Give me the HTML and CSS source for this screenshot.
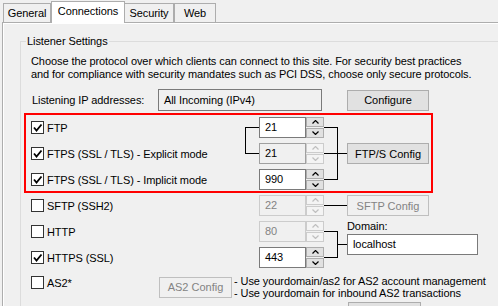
FILE: index.html
```html
<!DOCTYPE html>
<html lang="en">
<head>
    <meta charset="UTF-8">
    <title>Connections</title>
    <link rel="stylesheet" href="styles.css">
</head>
<body>
    <div class="tabs">
        <div class="tab tab-general">General</div>
        <div class="tab tab-active">Connections</div>
        <div class="tab tab-security">Security</div>
        <div class="tab tab-web">Web</div>
    </div>

    <div class="panel">
        <div class="page">
            <fieldset class="group">
                <legend>Listener Settings</legend>
                <p class="intro">Choose the protocol over which clients can connect to this site. For security best practices<br>and for compliance with security mandates such as PCI DSS, choose only secure protocols.</p>

                <div class="ip-row">
                    <span class="ip-label">Listening IP addresses:</span>
                    <div class="textbox ip-box">All Incoming (IPv4)</div>
                    <button class="btn">Configure</button>
                </div>

                <!-- FTP / FTPS rows, highlighted -->
                <div class="protocols highlight">
                    <label class="check c1 r1"><span class="box"><svg width="11" height="11"><path d="M2 5.5 4.5 8.5 9.5 2.5"/></svg></span>FTP</label>
                    <label class="check c1 r2"><span class="box"><svg width="11" height="11"><path d="M2 5.5 4.5 8.5 9.5 2.5"/></svg></span>FTPS (SSL / TLS) - Explicit mode</label>
                    <label class="check c1 r3"><span class="box"><svg width="11" height="11"><path d="M2 5.5 4.5 8.5 9.5 2.5"/></svg></span>FTPS (SSL / TLS) - Implicit mode</label>

                    <svg class="wire c2 r1-2" width="14" height="47"><path d="M0.5 10V37M0 10.5H14M0 36.5H14"/></svg>

                    <div class="spin c3 r1">
                        <span class="spin-value">21</span>
                        <span class="spin-arrows">
                            <span><svg width="7" height="4"><path d="M0.5 3.5 3.5 0.5 6.5 3.5"/></svg></span>
                            <span><svg width="7" height="4"><path d="M0.5 0.5 3.5 3.5 6.5 0.5"/></svg></span>
                        </span>
                    </div>
                    <div class="spin c3 r2 half-off">
                        <span class="spin-value">21</span>
                        <span class="spin-arrows">
                            <span><svg width="7" height="4"><path d="M0.5 3.5 3.5 0.5 6.5 3.5"/></svg></span>
                            <span><svg width="7" height="4"><path d="M0.5 0.5 3.5 3.5 6.5 0.5"/></svg></span>
                        </span>
                    </div>
                    <div class="spin c3 r3">
                        <span class="spin-value">990</span>
                        <span class="spin-arrows">
                            <span><svg width="7" height="4"><path d="M0.5 3.5 3.5 0.5 6.5 3.5"/></svg></span>
                            <span><svg width="7" height="4"><path d="M0.5 0.5 3.5 3.5 6.5 0.5"/></svg></span>
                        </span>
                    </div>

                    <svg class="wire c4 r1-3" width="23" height="73"><path d="M0 10.5H14M13.5 10V63M0 62.5H14M0 36.5H23"/></svg>

                    <button class="btn c5 r2">FTP/S Config</button>
                </div>

                <!-- SFTP / HTTP / HTTPS rows -->
                <div class="protocols lower">
                    <label class="check c1 r1"><span class="box"></span>SFTP (SSH2)</label>
                    <label class="check c1 r2"><span class="box"></span>HTTP</label>
                    <label class="check c1 r3"><span class="box"><svg width="11" height="11"><path d="M2 5.5 4.5 8.5 9.5 2.5"/></svg></span>HTTPS (SSL)</label>

                    <div class="spin c3 r1 disabled">
                        <span class="spin-value">22</span>
                        <span class="spin-arrows">
                            <span><svg width="7" height="4"><path d="M0.5 3.5 3.5 0.5 6.5 3.5"/></svg></span>
                            <span><svg width="7" height="4"><path d="M0.5 0.5 3.5 3.5 6.5 0.5"/></svg></span>
                        </span>
                    </div>
                    <div class="spin c3 r2 disabled">
                        <span class="spin-value">80</span>
                        <span class="spin-arrows">
                            <span><svg width="7" height="4"><path d="M0.5 3.5 3.5 0.5 6.5 3.5"/></svg></span>
                            <span><svg width="7" height="4"><path d="M0.5 0.5 3.5 3.5 6.5 0.5"/></svg></span>
                        </span>
                    </div>
                    <div class="spin c3 r3">
                        <span class="spin-value">443</span>
                        <span class="spin-arrows">
                            <span><svg width="7" height="4"><path d="M0.5 3.5 3.5 0.5 6.5 3.5"/></svg></span>
                            <span><svg width="7" height="4"><path d="M0.5 0.5 3.5 3.5 6.5 0.5"/></svg></span>
                        </span>
                    </div>

                    <svg class="wire c4 r1" width="23" height="21"><path d="M0 10.5H23"/></svg>
                    <svg class="wire c4 r2-3" width="23" height="47"><path d="M0 10.5H14M13.5 10V37M0 36.5H14M13.5 23.5H23"/></svg>

                    <button class="btn c5 r1" disabled>SFTP Config</button>

                    <div class="domain">
                        <span class="domain-label">Domain:</span>
                        <div class="textbox domain-box">localhost</div>
                    </div>
                </div>

                <div class="as2-row">
                    <label class="check as2-check"><span class="box"></span>AS2*</label>
                    <button class="btn as2-btn" disabled>AS2 Config</button>
                    <div class="as2-note">- Use yourdomain/as2 for AS2 account management<br>- Use yourdomain for inbound AS2 transactions</div>
                </div>

                <div class="bottom-row">
                    <button class="btn as2-btn"></button>
                </div>
            </fieldset>
        </div>
    </div>
</body>
</html>
```
FILE: styles.css
```css
html, body {
    overflow: hidden;
}
body {
    margin: 0;
    background-color: #f0f0f0;
    font-family: "Liberation Sans", Arial, sans-serif;
    font-size: 11px;
    letter-spacing: -0.08px;
    color: #000;
}

/* tab strip */
.tabs {
    display: flex;
    align-items: flex-end;
    height: 22px;
    padding-left: 3px;
}
.tab {
    box-sizing: border-box;
    height: 19px;
    line-height: 18px;
    text-align: center;
    border: 1px solid #adadad;
    border-bottom: none;
    background-color: #f0f0f0;
}
.tab-general {
    width: 48px;
}
.tab-active {
    width: 74px;
    height: 22px;
    margin-bottom: -1px;
    background-color: #fff;
    position: relative;
    z-index: 1;
}
.tab-security {
    width: 50px;
    margin-left: -1px;
}
.tab-web {
    width: 42px;
}

.panel {
    height: calc(100vh - 23px);
    margin-left: 2px;
    overflow: hidden;
    border-top: 1px solid #adadad;
    border-left: 1px solid #adadad;
    box-shadow: inset 1px 1px #fff;
}
.page {
    padding: 12px 0 0 17px;
}

/* group box */
.group {
    width: 520px;
    margin: 0;
    padding: 7px 0 0 10px;
    border: 1px solid #dcdcdc;
}
.group legend {
    margin-left: -5px;
    padding: 0 1px;
    line-height: 13px;
}
.intro {
    margin: 0;
    line-height: 13px;
}

.ip-row {
    display: flex;
    align-items: center;
    height: 22px;
    margin-top: 8px;
}
.ip-label {
    width: 126px;
    padding-left: 1px;
}

.textbox {
    box-sizing: border-box;
    height: 21px;
    line-height: 19px;
    padding-left: 5px;
    border: 1px solid #7a7a7a;
    background-color: #fff;
}
.ip-box {
    width: 164px;
    height: 22px;
    line-height: 20px;
    background-color: #f0f0f0;
}

.btn {
    box-sizing: border-box;
    width: 82px;
    height: 21px;
    padding: 0;
    border: 1px solid #adadad;
    background-color: #e1e1e1;
    font: inherit;
    color: #000;
}
.btn:disabled {
    border-color: #bfbfbf;
    background-color: #f0f0f0;
    color: #838383;
}
.ip-row .btn {
    margin-left: 25px;
}

/* protocol grid */
.protocols {
    display: grid;
    grid-template-columns: 214px 14px 65px 23px 82px 49px;
    grid-auto-rows: 21px;
    row-gap: 5px;
}
.highlight {
    box-sizing: border-box;
    width: 409px;
    margin: 2px 0 0 -7px;
    padding: 2px 0 1px 5px;
    border: 2px solid #ff0000;
}
.lower {
    margin-top: 2px;
}
.c1 { grid-column: 1; }
.c2 { grid-column: 2; }
.c3 { grid-column: 3; }
.c4 { grid-column: 4; }
.c5 { grid-column: 5; }
.r1 { grid-row: 1; }
.r2 { grid-row: 2; }
.r3 { grid-row: 3; }
.r1-2 { grid-row: 1 / 3; }
.r1-3 { grid-row: 1 / 4; }
.r2-3 { grid-row: 2 / 4; }

.check {
    display: flex;
    align-items: center;
    gap: 3px;
}
.box {
    box-sizing: border-box;
    width: 13px;
    height: 13px;
    border: 1px solid #333;
    background-color: #fff;
    display: flex;
}
.box path {
    fill: none;
    stroke: #000;
    stroke-width: 1.8;
}

.wire path {
    fill: none;
    stroke: #000;
    stroke-width: 1;
}

/* spin box */
.spin {
    display: flex;
    height: 21px;
}
.spin-value {
    box-sizing: border-box;
    width: 47px;
    line-height: 19px;
    padding-left: 5px;
    border: 1px solid #7a7a7a;
    background-color: #fff;
}
.spin-arrows {
    display: flex;
    flex-direction: column;
    justify-content: space-between;
    width: 18px;
}
.spin-arrows span {
    box-sizing: border-box;
    height: 10px;
    display: flex;
    align-items: center;
    justify-content: center;
    border: 1px solid #adadad;
    background-color: #e1e1e1;
}
.spin-arrows path {
    fill: none;
    stroke: #000;
    stroke-width: 1.2;
}
.half-off .spin-value {
    border-color: #a0a0a0;
    background-color: #f0f0f0;
}
.half-off .spin-arrows span,
.disabled .spin-arrows span {
    border-color: #cccccc;
    background-color: #f4f4f4;
}
.half-off .spin-arrows path,
.disabled .spin-arrows path {
    stroke: #bfbfbf;
}
.disabled .spin-value {
    border-color: #cccccc;
    background-color: #f0f0f0;
    color: #838383;
}

.domain {
    grid-column: 5 / 7;
    grid-row: 2 / 4;
    display: flex;
    flex-direction: column;
}
.domain-label {
    margin-top: -1px;
    line-height: 13px;
}
.domain-box {
    width: 131px;
    margin-top: 1px;
}

/* AS2 */
.as2-row {
    display: flex;
    align-items: center;
    margin-top: 7px;
}
.as2-check {
    align-self: flex-start;
    width: 128px;
    margin-top: 1px;
}
.as2-btn {
    width: 73px;
}
.as2-note {
    margin-left: 2px;
    line-height: 12px;
}
.bottom-row {
    margin: 3px 0 0 317px;
}
```
